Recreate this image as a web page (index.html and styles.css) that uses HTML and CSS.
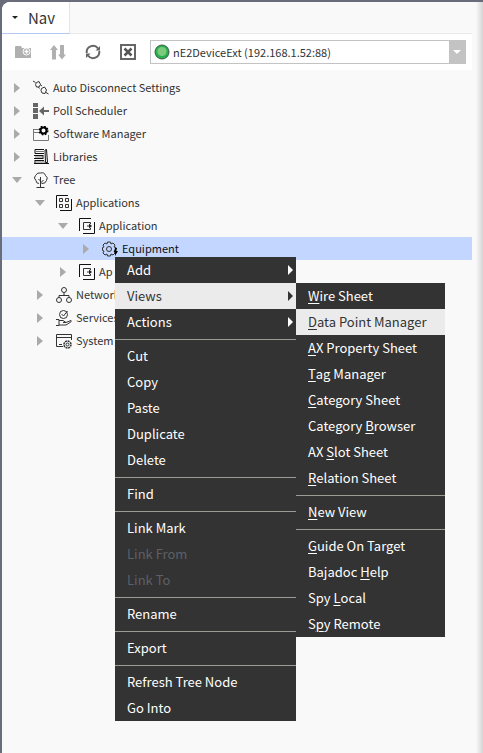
FILE: index.html
```html
<!DOCTYPE html>
<html lang="en">
<head>
<meta charset="utf-8">
<title>Nav</title>
<link rel="stylesheet" href="styles.css">
</head>
<body>
<svg class="defs" aria-hidden="true">
  <symbol id="app" viewBox="0 0 16 16"><path d="M.5 13V.5H12M4 15.500h11.500V4" stroke="#111"/><path d="M11.500 6V4.500h-7v7h7V10" stroke="#333"/><path d="M8 8h3" stroke="#333"/><path d="M10 5.500 13 8l-3 2.500z" fill="#222" stroke="none"/></symbol>
</svg>
<main class="panel">
  <header class="tabs">
    <button class="tab"><span class="caret"></span>Nav</button>
  </header>
  <div class="toolbar">
    <button class="tool" aria-label="New folder"><svg width="16" height="16" viewBox="0 0 16 16"><path d="M0 3q0-1 1-1h5l1 2h9v10H0z" fill="#b0b0b0"/><circle cx="11.500" cy="7.500" r="3.500" fill="none" stroke="#fff"/><path d="M11.500 5.500v4M9.500 7.500h4" stroke="#fff" stroke-width="1.500"/></svg></button>
    <button class="tool" aria-label="Sort"><svg width="16" height="16" viewBox="0 0 16 16"><path d="M4 1l4 5H6v9.500H2V6H0zM12 15.500l4-5h-2V1h-4v9.500H8z" fill="#b0b0b0"/></svg></button>
    <button class="tool" aria-label="Refresh"><svg width="16" height="16" viewBox="0 0 16 16" fill="none" stroke="#666" stroke-width="2"><path d="M1.800 9A6.200 6.200 0 0 1 13 4.500M14.200 7A6.200 6.200 0 0 1 3 11.500"/><path d="M15 2v4.500h-4.500zM1 14V9.500h4.500z" fill="#666" stroke="none"/></svg></button>
    <button class="tool" aria-label="Close"><svg width="16" height="16" viewBox="0 0 16 16" fill="none" stroke="#666"><path d="M1 1h14v14H1z" stroke-width="2"/><path d="M4.500 4.500l7 7M11.500 4.500l-7 7" stroke="#555" stroke-width="2.500"/></svg></button>
    <div class="picker">
      <svg class="dot" width="16" height="16" viewBox="0 0 16 16"><circle cx="8" cy="8" r="7" fill="#27b14b" stroke="#3f5a48"/><circle cx="8" cy="7.500" r="4.500" fill="#7fc97f"/></svg>
      <select class="device" aria-label="Device"><option>nE2DeviceExt (192.168.1.52:88)</option></select>
      <span class="drop"></span>
    </div>
  </div>

  <ul class="tree">
    <li><div class="row"><span class="arrow"></span><svg class="icon" viewBox="0 0 16 16"><path d="M0 1l2.500 1.500M2.500 4.500l1-2 2.500-1 1.500 3-1.500 2.500-2.500 0zM5.500 7l1 1.500M7.500 5l1.500 1M8 10.500l.5-2 3-1.500 2 3-1.500 3.500-3-.5zM13 12.500l2.500 1.500"/></svg>Auto Disconnect Settings</div></li>
    <li><div class="row"><span class="arrow"></span><svg class="icon" viewBox="0 0 16 16"><path d="M0 0h5v4H0zM0 5h5v5H0zM0 11h5v5H0zM6 8l5-4.500V7h5v2h-5v3.500z" fill="#666" stroke="none"/></svg>Poll Scheduler</div></li>
    <li><div class="row"><span class="arrow"></span><svg class="icon" viewBox="0 0 16 16"><path d="M.5 3.500h5M.5 3v11.500h15V9M.5 6.500h6" stroke="#777"/><circle cx="10.500" cy="4.500" r="3" stroke="#000" stroke-width="2"/><circle cx="10.500" cy="4.500" r="4" stroke="#000" stroke-width="2" stroke-dasharray="1.600 1.542"/></svg>Software Manager</div></li>
    <li><div class="row"><span class="arrow"></span><svg class="icon" viewBox="0 0 16 16"><path d="M2 .5h9M2 4.500h9M2 .5v4M1 6.500h9M1 9.500h9M10 6v4M2 11.500h9M1 14.500h15M2 11v3M12 1l1.500-.5 1 13h-2z" stroke="#111"/><path d="M3 2.500h8M2 8h8M3 13h9" stroke="#777"/></svg>Libraries</div></li>
    <li><div class="row"><span class="arrow open"></span><svg class="icon" viewBox="0 0 16 16"><path d="M7.500 15V5M3.500 15.500h8M7.500 11l3-3M7.500 9l-2-2M6 11.500q-3 0-3-3Q0 6 2.500 3.500 4.500 0 7.500 1q4-1 5 2.500 3 2 1 5-1 3.500-5 3"/></svg>Tree</div>
      <ul>
        <li><div class="row"><span class="arrow open"></span><svg class="icon" viewBox="0 0 16 16"><path d="M.5 13V.5H12M4 15.500h11.500V4" stroke="#111"/><path d="M3.500 3.500h3v3h-3zM9.500 3.500h3v3h-3zM3.500 9.500h3v3h-3zM9.500 9.500h3v3h-3z"/></svg>Applications</div>
          <ul>
            <li><div class="row"><span class="arrow open"></span><svg class="icon"><use href="#app"/></svg>Application</div>
              <ul>
                <li><div class="row selected"><span class="arrow"></span><svg class="icon" viewBox="0 0 16 16"><circle cx="7" cy="8" r="2.500"/><path d="M5.500 1h3l.5 2 2-1 2 2-1 2 2 .5v3l-2 .5 1 2-2 2-2-1-.5 2h-3L5 13l-2 1-2-2 1-2-1.500-.5v-3L2 6 1 4l2-2 2 1z"/><path d="M13 7h2l-1 3h2l-3 5v-4h-1z" fill="#000" stroke="none"/></svg>Equipment
                  <div class="menu context" role="menu">
                    <button class="item more">Add</button>
                    <div class="parent"><button class="item more active">Views</button>
                      <div class="menu sub" role="menu">
                        <button class="item"><u>W</u>ire Sheet</button>
                        <button class="item active"><u>D</u>ata Point Manager</button>
                        <button class="item"><u>A</u>X Property Sheet</button>
                        <button class="item"><u>T</u>ag Manager</button>
                        <button class="item"><u>C</u>ategory Sheet</button>
                        <button class="item">Category <u>B</u>rowser</button>
                        <button class="item">AX <u>S</u>lot Sheet</button>
                        <button class="item"><u>R</u>elation Sheet</button>
                        <hr>
                        <button class="item"><u>N</u>ew View</button>
                        <hr>
                        <button class="item"><u>G</u>uide On Target</button>
                        <button class="item">Bajadoc <u>H</u>elp</button>
                        <button class="item">Spy <u>L</u>ocal</button>
                        <button class="item">S<u>p</u>y Remote</button>
                      </div>
                    </div>
                    <button class="item more">Actions</button>
                    <hr>
                    <button class="item">Cut</button>
                    <button class="item">Copy</button>
                    <button class="item">Paste</button>
                    <button class="item">Duplicate</button>
                    <button class="item">Delete</button>
                    <hr>
                    <button class="item">Find</button>
                    <hr>
                    <button class="item">Link Mark</button>
                    <button class="item" disabled>Link From</button>
                    <button class="item" disabled>Link To</button>
                    <hr>
                    <button class="item">Rename</button>
                    <hr>
                    <button class="item">Export</button>
                    <hr>
                    <button class="item">Refresh Tree Node</button>
                    <button class="item">Go Into</button>
                  </div></div></li>
              </ul></li>
            <li><div class="row"><span class="arrow"></span><svg class="icon"><use href="#app"/></svg>Ap</div></li>
          </ul></li>
        <li><div class="row"><span class="arrow"></span><svg class="icon" viewBox="0 0 16 16"><circle cx="8" cy="3" r="2.500"/><circle cx="3" cy="13" r="2.500"/><circle cx="13" cy="13" r="2.500"/><path d="M8 5.500v3M3 10.500v-2h10v2"/></svg>Network</div></li>
        <li><div class="row"><span class="arrow"></span><svg class="icon" viewBox="0 0 16 16"><circle cx="7.500" cy="4.500" r="4"/><path d="M5.500 4l2 2 4-5M0 9.500h3v6H0M3 10.500h4l3 2H7M10 12.500l5-2q1 1-1 2l-4 2.500H3"/></svg>Services</div></li>
        <li><div class="row"><span class="arrow"></span><svg class="icon" viewBox="0 0 16 16"><path d="M7 13.500H.5V1.500h15V7M.5 4.500h15M3 11.500h3"/><circle cx="11.500" cy="11.500" r="1.500"/><circle cx="11.500" cy="11.500" r="3.500" stroke-width="1.500" stroke-dasharray="2 .7"/></svg>System</div></li>
      </ul></li>
  </ul>
</main>
</body>
</html>
```
FILE: styles.css
```css
* { box-sizing: border-box; }
body {
  margin: 0;
  background: #696d79;
  color: #333;
  font: 11px/23px "Noto Sans CJK SC", sans-serif;
}
button, select { font: inherit; color: inherit; border: 0; padding: 0; background: none; }
.defs { position: absolute; width: 0; height: 0; }
.defs symbol { fill: none; }

.panel {
  min-height: calc(100vh - 2px);
  margin: 2px 0 0 2px;
  padding-right: 11px;
  background: linear-gradient(to left, #d4d4d4, #f9f9f9 7px);
  border-top-left-radius: 8px;
  overflow: hidden;
}
.tabs { display: flex; border-bottom: 1px solid #eaeaea; }
.tab {
  display: flex;
  align-items: center;
  gap: 8px;
  height: 32px;
  margin-bottom: -1px;
  padding: 0 14px 0 10px;
  border-right: 1px solid #e4e4e4;
  border-bottom: 1px solid #b5c8f0;
  background: #fff;
  font-size: 15px;
}
.caret { margin-right: 2px; border: 3px solid transparent; border-top-color: #222; border-bottom: 0; }

.toolbar { display: flex; align-items: center; height: 36px; padding: 0 6px 0 13px; background: #fff; }
.tool { display: flex; margin-right: 19px; }
.picker { position: relative; display: flex; align-items: center; flex: 1; height: 24px; margin-left: -5px; border: 1px solid #c3c3c3; }
.dot { position: absolute; left: 3px; pointer-events: none; }
.device { appearance: none; width: 100%; height: 22px; padding-left: 22px; outline: 0; }
.drop { position: absolute; right: 0; display: grid; place-items: center; width: 16px; height: 22px; background: #c3c3c3; pointer-events: none; }
.drop::after { content: ""; border: 4px solid transparent; border-top-color: #fff; border-bottom: 0; }

.tree, .tree ul { margin: 0; padding: 0; list-style: none; }
.tree { --level: 0; padding-top: 6px; }
.tree ul { --level: 1; }
.tree ul ul { --level: 2; }
.tree ul ul ul { --level: 3; }
.row {
  display: flex;
  align-items: center;
  position: relative;
  height: 23px;
  padding-left: calc(10px + var(--level) * 23px);
  white-space: nowrap;
}
.selected { background: #c2d6ff; color: #111; }
.icon { width: 16px; height: 16px; margin: 0 4px 0 9px; fill: none; stroke: #333; }
.arrow { display: grid; justify-items: start; align-items: center; width: 12px; padding-left: 2px; }
.arrow::after { content: ""; border: 5px solid transparent; border-left: 6px solid #aaa; border-right: 0; }
.arrow.open { padding-left: 0; }
.arrow.open::after { border: 5px solid transparent; border-top: 6px solid #aaa; border-bottom: 0; }

.menu { position: absolute; background: #333; color: #fff; font-size: 13px; }
.context { top: 20px; left: 113px; width: 181px; z-index: 1; }
.sub { top: 0; left: 100%; width: 149px; }
.parent { position: relative; }
.item { display: flex; align-items: center; width: 100%; height: 26px; padding: 0 12px 2px; white-space: pre; }
.item.active { background: #ebebeb; color: #333; }
.item:disabled { color: #5d6068; }
.item u { text-underline-offset: 2px; }
.more::after { content: ""; margin: 2px -9px 0 auto; border: 5px solid transparent; border-left-color: currentColor; border-right: 0; }
hr { height: 8px; margin: 0; border: 0; background: linear-gradient(#9b9d94, #9b9d94) 0 4px / 100% 1px no-repeat; }
```
